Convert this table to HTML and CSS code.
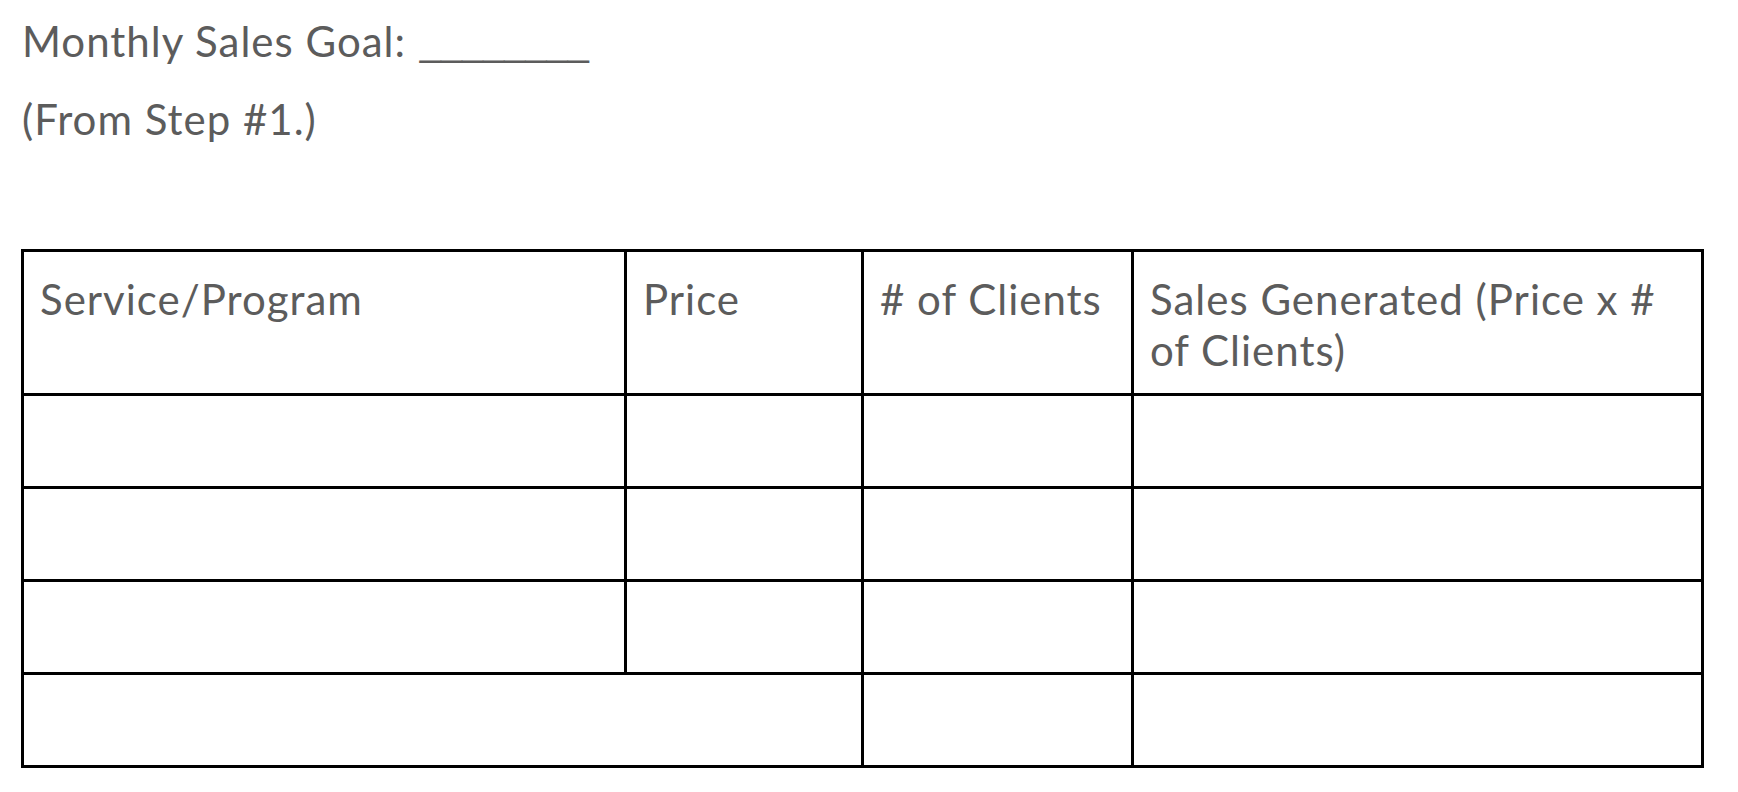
FILE: index.html
```html
<!DOCTYPE html>
<html lang="en">
<head>
<meta charset="utf-8">
<title>Monthly Sales Goal</title>
<link rel="stylesheet" href="styles.css">
</head>
<body>
<main class="page">
  <p class="line">Monthly Sales Goal: <span class="blank">________</span></p>
  <p class="line line-step">(From Step #1.)</p>
  <div class="sheet" role="table">
    <div class="cell head" role="columnheader">Service/Program</div>
    <div class="cell head" role="columnheader">Price</div>
    <div class="cell head" role="columnheader"># of Clients</div>
    <div class="cell head" role="columnheader">Sales Generated (Price x # of Clients)</div>

    <div class="cell"></div><div class="cell"></div><div class="cell"></div><div class="cell"></div>
    <div class="cell"></div><div class="cell"></div><div class="cell"></div><div class="cell"></div>
    <div class="cell"></div><div class="cell"></div><div class="cell"></div><div class="cell"></div>

    <div class="cell span2"></div><div class="cell"></div><div class="cell"></div>
  </div>
</main>
</body>
</html>
```

FILE: styles.css
```css
html, body {
  margin: 0;
  padding: 0;
  background: #ffffff;
}

.page {
  padding: 16px 0 0 21px;
  font-family: Lato, "Open Sans", "Liberation Sans", sans-serif;
  font-size: 42px;
  line-height: 51px;
  letter-spacing: 1px;
  color: #5c5c5c;
}

.line {
  margin: 0;
  padding-left: 1px;
}

.blank {
  font-family: "Liberation Sans", Arial, sans-serif;
  font-size: 38px;
  letter-spacing: 0;
  margin-left: 2px;
  vertical-align: 2px;
}

.line-step {
  margin-top: 26px;
}

.sheet {
  margin-top: 104px;
  display: grid;
  grid-template-columns: 600px 234px 267px 567px;
  grid-template-rows: 141px 90px 90px 90px 90px;
  gap: 3px;
  padding: 3px;
  width: max-content;
  background: #000000;
}

.cell {
  background: #ffffff;
  padding: 22px 16px 0 16px;
}

.span2 {
  grid-column: span 2;
}
```
